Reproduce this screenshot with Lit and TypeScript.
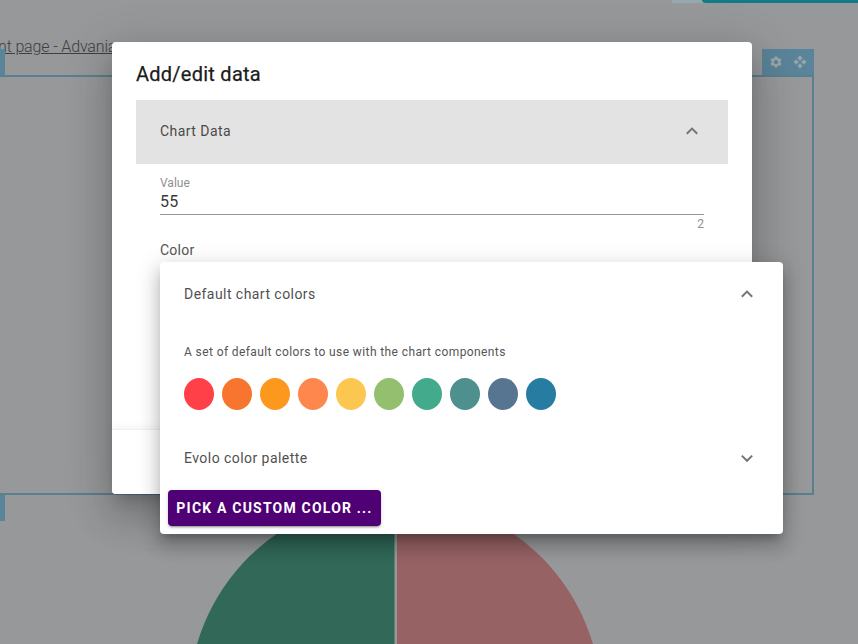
import { LitElement, html, css, svg } from "lit";
import { customElement } from "lit/decorators.js";

const SWATCHES = ["#ff4049", "#f7752f", "#fc981e", "#fe874d", "#fbc750", "#93bf6f", "#43aa8b", "#4d908e", "#577590", "#277da1"];

const chevron = (up: boolean) => html`<svg class="chev" width="14" height="9" viewBox="0 0 14 9">
  <polyline points=${up ? "1.8,6.8 7,1.6 12.2,6.8" : "1.8,1.6 7,6.8 12.2,1.6"} fill="none" stroke="#757575" stroke-width="2"></polyline>
</svg>`;

@customElement("app-root")
export class AppRoot extends LitElement {
  static styles = css`
    :host {
      display: block;
      position: relative;
      width: 858px;
      height: 644px;
      overflow: hidden;
      background: #97989a;
      font-family: Roboto, "Liberation Sans", sans-serif;
      color: #444;
    }
    .topbar { position: absolute; top: 0; left: 672px; right: 0; height: 3px; background: #96a8ab; }
    .topbar i { position: absolute; left: 30px; right: 0; top: 0; bottom: 0; background: #147a8a; border-bottom-left-radius: 4px 3px; }
    .crumb {
      position: absolute; left: -2px; top: 37px; white-space: nowrap;
      font-size: 16px; line-height: 19px; font-weight: 300; letter-spacing: -.15px; color: #3f3f40; text-decoration: underline;
    }
    .frame { position: absolute; left: -10px; top: 75px; width: 824px; height: 420px; box-sizing: border-box; border: 2px solid #5a7f90; }
    .grip { position: absolute; background: #5a8499; }
    .grip.tl { left: 0; top: 49px; width: 5px; height: 26px; }
    .grip.bl { left: 0; top: 495px; width: 5px; height: 26px; }
    .tools { position: absolute; left: 762px; top: 49px; width: 52px; height: 26px; background: #5a8499; display: flex; align-items: center; gap: 10px; padding-left: 7px; box-sizing: border-box; }
    .tools svg { display: block; fill: #9ea6aa; }
    .pie { position: absolute; left: 0; top: 0; }

    .dialog {
      position: absolute; left: 112px; top: 42px; width: 640px; height: 452px;
      display: flex; flex-direction: column;
      background: #fff; border-radius: 4px;
      box-shadow: 0 11px 15px -7px rgba(0,0,0,.2), 0 24px 38px 3px rgba(0,0,0,.14), 0 9px 46px 8px rgba(0,0,0,.12);
    }
    .title { margin: 20px 24px 14px; font-size: 20px; line-height: 24px; font-weight: 400; letter-spacing: .25px; color: #1c1c1c; -webkit-text-stroke: .25px #1c1c1c; }
    .content { flex: 1; margin: 0 24px; overflow: hidden; }
    .panel-head { height: 64px; background: #e3e3e3; display: flex; align-items: center; justify-content: space-between; padding: 0 29px 2px 24px; box-sizing: border-box; font-size: 14px; letter-spacing: .45px; color: #4a4a4a; }
    .field { margin: 0 24px; padding-top: 13px; }
    .field label { display: block; font-size: 12px; line-height: 13px; letter-spacing: 0; color: #8f8f8f; }
    .field .val { font-size: 16px; line-height: 23px; color: #3a3a3a; letter-spacing: .3px; border-bottom: 1px solid #949494; height: 24px; }
    .hint { text-align: right; font-size: 12px; line-height: 18px; color: #8f8f8f; }
    .color { margin: 8px 24px 0; font-size: 14px; line-height: 18px; letter-spacing: .25px; color: #555; }
    .actions { height: 64px; background: #fff; border-top: 1px solid #f0f0f0; box-shadow: 0 -3px 6px rgba(0,0,0,.04); border-radius: 0 0 4px 4px; }

    .popup {
      position: absolute; left: 160px; top: 262px; width: 623px; height: 272px;
      background: #fff; border-radius: 4px;
      box-shadow: 0 7px 8px -4px rgba(0,0,0,.2), 0 12px 17px 2px rgba(0,0,0,.14), 0 5px 22px 4px rgba(0,0,0,.12);
    }
    .row { height: 64px; display: flex; align-items: center; justify-content: space-between; padding: 0 29px 0 24px; font-size: 14px; letter-spacing: .45px; color: #505050; }
    .body { padding: 16px 24px; }
    .body p { margin: 0 0 16px; font-size: 12px; line-height: 20px; letter-spacing: .4px; color: #555; }
    .swatches { display: flex; gap: 8px; }
    .swatches span { width: 30px; height: 32px; border-radius: 50%; }
    .pick {
      display: block; margin: 0 0 0 8px; width: 213px; height: 36px; padding: 0; border: 0; border-radius: 4px;
      background: #4f0074; color: #fff; font: 700 14px/36px Roboto, sans-serif; letter-spacing: 1.2px; white-space: nowrap;
      box-shadow: 0 3px 1px -2px rgba(0,0,0,.2), 0 2px 2px 0 rgba(0,0,0,.14), 0 1px 5px 0 rgba(0,0,0,.12);
    }
  `;

  render() {
    return html`
      <div class="topbar"><i></i></div>
      <div class="crumb">nt page - Advania</div>
      <div class="frame"></div>
      <div class="grip tl"></div>
      <div class="grip bl"></div>
      <div class="tools">
        <svg width="14" height="14" viewBox="0 0 24 24"><path d="M19.14 12.94c.04-.3.06-.61.06-.94 0-.32-.02-.64-.07-.94l2.03-1.58c.18-.14.23-.41.12-.61l-1.92-3.32c-.12-.22-.37-.29-.59-.22l-2.39.96c-.5-.38-1.03-.7-1.62-.94l-.36-2.54c-.04-.24-.24-.41-.48-.41h-3.84c-.24 0-.43.17-.47.41l-.36 2.54c-.59.24-1.13.57-1.62.94l-2.39-.96c-.22-.08-.47 0-.59.22L2.74 8.87c-.12.21-.08.47.12.61l2.03 1.58c-.05.3-.09.63-.09.94s.02.64.07.94l-2.03 1.58c-.18.14-.23.41-.12.61l1.92 3.32c.12.22.37.29.59.22l2.39-.96c.5.38 1.03.7 1.62.94l.36 2.54c.05.24.24.41.48.41h3.84c.24 0 .44-.17.47-.41l.36-2.54c.59-.24 1.13-.56 1.62-.94l2.39.96c.22.08.47 0 .59-.22l1.92-3.32c.12-.22.07-.47-.12-.61l-2.01-1.58zM12 15.6c-1.98 0-3.6-1.62-3.6-3.6s1.62-3.6 3.6-3.6 3.6 1.62 3.6 3.6-1.62 3.6-3.6 3.6z"></path></svg>
        <svg width="14" height="14" viewBox="0 0 24 24"><path d="M10 9h4V6h3l-5-5-5 5h3v3zm-1 1H6V7l-5 5 5 5v-3h3v-4zm14 2l-5-5v3h-3v4h3v3l5-5zm-9 3h-4v3H7l5 5 5-5h-3v-3z"></path></svg>
      </div>
      <svg class="pie" width="858" height="644" viewBox="0 0 858 644">
        ${svg`<path d="M394.5 496.4A206.6 206.6 0 0 0 188.4 703H394.5Z" fill="#316858"></path>
        <path d="M397 496.4A206.6 206.6 0 0 1 601.6 703H397Z" fill="#966264"></path>`}
      </svg>

      <div class="dialog">
        <div class="title">Add/edit data</div>
        <div class="content">
          <div class="panel-head"><span>Chart Data</span>${chevron(true)}</div>
          <div class="field">
            <label>Value</label>
            <div class="val">55</div>
            <div class="hint">2</div>
          </div>
          <div class="color">Color</div>
        </div>
        <div class="actions"></div>
      </div>

      <div class="popup">
        <div class="row"><span>Default chart colors</span>${chevron(true)}</div>
        <div class="body">
          <p>A set of default colors to use with the chart components</p>
          <div class="swatches">
            ${SWATCHES.map((c) => html`<span style="background:${c}"></span>`)}
          </div>
        </div>
        <div class="row"><span>Evolo color palette</span>${chevron(false)}</div>
        <button class="pick">PICK A CUSTOM COLOR ...</button>
      </div>
    `;
  }
}
